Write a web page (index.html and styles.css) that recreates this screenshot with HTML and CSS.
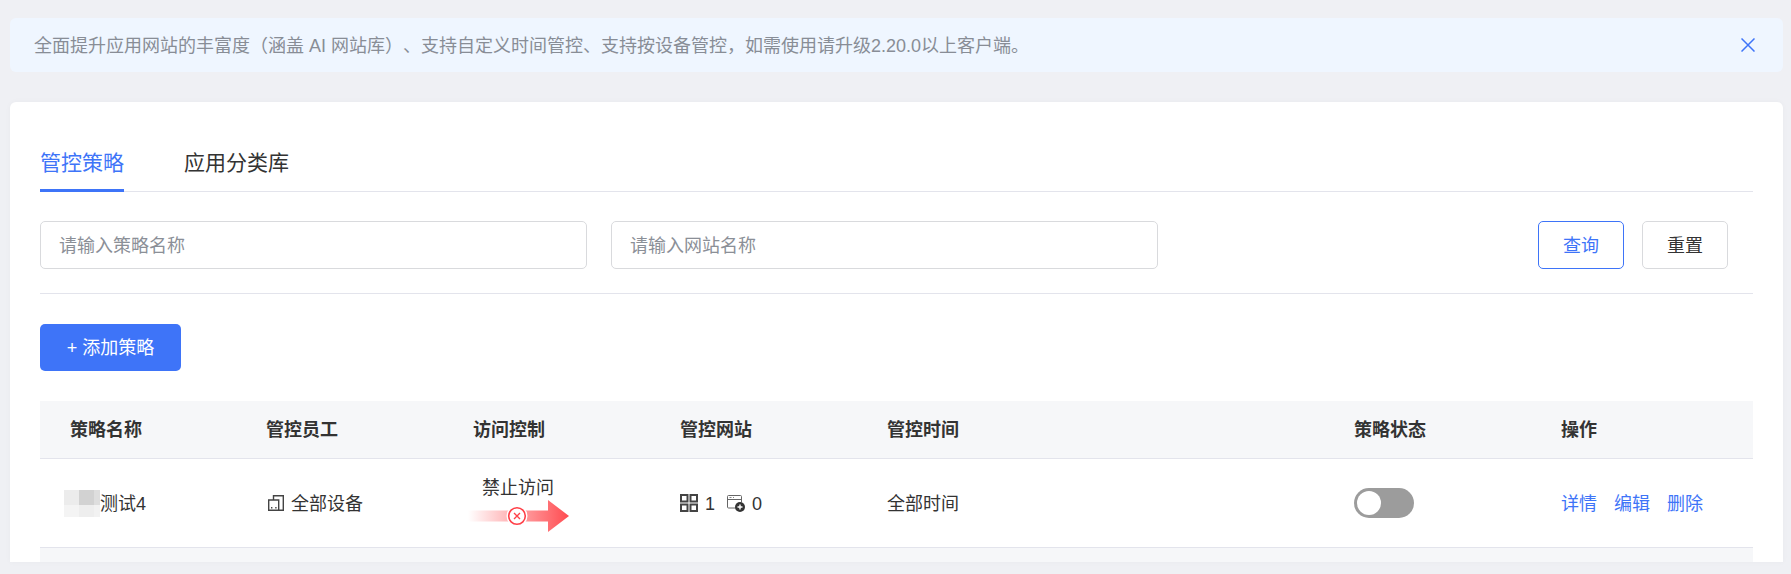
FILE: index.html
```html
<!DOCTYPE html>
<html lang="zh-CN">
<head>
<meta charset="utf-8">
<title>管控策略</title>
<link rel="stylesheet" href="styles.css">
</head>
<body>
<div class="alert">
  <span class="alert-text">全面提升应用网站的丰富度（涵盖 AI 网站库）、支持自定义时间管控、支持按设备管控，如需使用请升级2.20.0以上客户端。</span>
  <svg class="close" width="14" height="14" viewBox="0 0 14 14"><path d="M.5.500l13 13M13.500.500l-13 13" fill="none" stroke="#3e74f8" stroke-width="1.500"/></svg>
</div>
<main class="card">
  <div class="tabs">
    <div class="tab active">管控策略</div>
    <div class="tab">应用分类库</div>
  </div>
  <div class="search">
    <input class="field" placeholder="请输入策略名称">
    <input class="field" placeholder="请输入网站名称">
    <div class="search-actions">
      <button class="btn btn-outline">查询</button>
      <button class="btn">重置</button>
    </div>
  </div>
  <button class="btn-add">+ 添加策略</button>
  <div class="table">
    <div class="row head">
      <div>策略名称</div><div>管控员工</div><div>访问控制</div><div>管控网站</div><div>管控时间</div><div>策略状态</div><div>操作</div>
    </div>
    <div class="row body">
      <div class="name">
        <svg class="mosaic" width="36" height="27" viewBox="0 0 36 27">
          <rect width="15" height="12" fill="#ececec"/><rect x="15" width="15" height="15" fill="#d2d2d2"/><rect x="30" width="6" height="15" fill="#dedede"/>
          <rect y="12" width="15" height="3" fill="#ececec"/><rect y="15" width="15" height="12" fill="#f4f4f4"/><rect x="15" y="15" width="15" height="12" fill="#eeeeee"/><rect x="30" y="15" width="6" height="12" fill="#f2f2f2"/>
        </svg>
        <span class="txt">测试4</span>
      </div>
      <div class="device">
        <svg width="16" height="16" viewBox="0 0 16 16" fill="none" stroke="#444" stroke-width="1.400"><path d="M5.500 5V.7h9.800v14.600H.7V5h10v10.300"/><path d="M3 12.800h1.400M7.200 12.800h1.400" stroke-width="1.600"/></svg>
        <span class="txt">全部设备</span>
      </div>
      <div class="access">
        <span class="access-label">禁止访问</span>
        <svg width="101" height="32" viewBox="0 0 101 32">
          <defs><linearGradient id="arrowFill" x1="0" x2="1" y1="0" y2="0"><stop offset="0" stop-color="#ff4b50" stop-opacity="0"/><stop offset="1" stop-color="#ff4b50"/></linearGradient></defs>
          <path d="M0 10.500H80V0l21 16-21 16V21.500H0z" fill="url(#arrowFill)"/>
          <circle cx="49" cy="16" r="10.500" fill="#fff"/>
          <circle cx="49" cy="16" r="8.300" fill="#fff" stroke="#ff4048" stroke-width="1.600"/>
          <path d="M46 13l6 6M52 13l-6 6" stroke="#ff4048" stroke-width="1.400"/>
        </svg>
      </div>
      <div class="sites">
        <svg class="grid-icon" width="18" height="18" viewBox="0 0 18 18" fill="none" stroke="#444" stroke-width="2"><rect x="1" y="1" width="6.500" height="6.500"/><rect x="10.500" y="1" width="6.500" height="6.500"/><rect x="1" y="10.500" width="6.500" height="6.500"/><rect x="10.500" y="10.500" width="6.500" height="6.500"/></svg>
        <span class="txt count">1</span>
        <svg class="web" width="18" height="17" viewBox="0 0 18 17" fill="none"><path d="M9 13H1.500a1 1 0 0 1-1-1V1.500a1 1 0 0 1 1-1h12a1 1 0 0 1 1 1V7M.5 4.500h14" stroke="#666"/><path d="M2.500 2.500h2M6 2.500h1" stroke="#888"/><circle cx="13" cy="12" r="5" fill="#333"/><path d="M10.500 12h5M13 9.500v5" stroke="#fff" stroke-width="1.400"/></svg>
        <span class="txt count">0</span>
      </div>
      <div class="time"><span class="txt">全部时间</span></div>
      <div><div class="switch"><div class="knob"></div></div></div>
      <div class="links"><a class="txt">详情</a><a class="txt">编辑</a><a class="txt">删除</a></div>
    </div>
  </div>
</main>
</body>
</html>
```

FILE: styles.css
```css
* { box-sizing: border-box; }
html, body { height: 100%; }
body {
  margin: 0;
  padding: 18px 8px 0 10px;
  overflow: hidden;
  background: #eff0f4;
  color: #333;
  font: 18px/1.4 "Liberation Sans", "Noto Sans CJK SC", sans-serif;
  text-spacing-trim: space-all;
}
.alert {
  height: 54px;
  padding: 0 28px 0 24px;
  display: flex;
  align-items: center;
  justify-content: space-between;
  background: #eff6ff;
  border-radius: 6px;
  color: #888d96;
}
.alert-text { padding-top: 4px; }
.card {
  height: 460px;
  margin-top: 30px;
  padding: 0 30px;
  overflow: hidden;
  background: #fff;
  border-radius: 6px 6px 0 0;
  box-shadow: 0 0 6px rgba(0, 0, 0, .03);
}
.tabs {
  height: 90px;
  display: flex;
  align-items: flex-end;
  gap: 60px;
  border-bottom: 1px solid #e3e4ec;
}
.tab {
  height: 57px;
  margin-bottom: -1px;
  padding-top: 13px;
  font-size: 21px;
  line-height: 29px;
  border-bottom: 3px solid transparent;
}
.tab.active { color: #3e74f8; border-bottom-color: #3e74f8; }
.search {
  display: flex;
  gap: 24px;
  padding: 29px 25px 24px 0;
  border-bottom: 1px solid #e3e4ec;
}
.field {
  width: 547px;
  height: 48px;
  padding: 3px 18px 0;
  border: 1px solid #d9dadd;
  border-radius: 5px;
  font: inherit;
  outline: none;
}
.field::placeholder { color: #8b8f97; opacity: 1; }
.search-actions { margin-left: auto; display: flex; gap: 18px; }
.btn {
  width: 86px;
  height: 48px;
  padding: 3px 0 0;
  background: #fff;
  border: 1px solid #d9dadd;
  border-radius: 5px;
  color: #333;
  font: inherit;
}
.btn-outline { border-color: #3e74f8; color: #3e74f8; }
.btn-add {
  display: block;
  width: 141px;
  height: 47px;
  margin-top: 30px;
  padding: 2px 0 0;
  background: #3e74f8;
  border: 0;
  border-radius: 5px;
  color: #fff;
  font: inherit;
}
.table { margin-top: 30px; background: #f6f7f9; height: 200px; }
.row {
  display: grid;
  grid-template-columns: 196px 207px 207px 207px 467px 207px 222px;
  align-items: center;
  border-bottom: 1px solid #e3e4ec;
}
.row > div { padding-left: 30px; }
.head { height: 58px; padding-top: 2px; font-weight: 700; }
.body { height: 89px; background: #fff; }
.txt { display: block; padding-top: 4px; }
.row > .name { padding-left: 24px; display: flex; align-items: center; }
.mosaic { flex: none; }
.row > .device { padding-left: 32px; display: flex; align-items: center; gap: 7px; }
.row > .access {
  padding-left: 25px;
  display: flex;
  flex-direction: column;
  align-items: flex-start;
  margin-top: 1px;
}
.access-label { margin: 0 0 -1px 14px; line-height: 26px; }
.access svg { display: block; }
.row > .sites { padding-left: 30px; display: flex; align-items: center; }
.count { margin-left: 7px; }
.web { margin-left: 12px; }
.switch {
  width: 60px;
  height: 30px;
  padding: 3px;
  background: #9c9c9c;
  border-radius: 15px;
}
.knob { width: 24px; height: 24px; background: #fff; border-radius: 50%; }
.row > .links { display: flex; gap: 17px; color: #3e74f8; }
```
